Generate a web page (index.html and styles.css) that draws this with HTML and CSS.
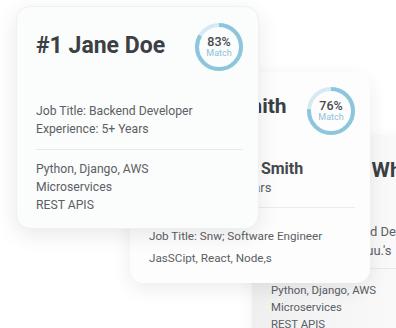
FILE: index.html
```html
<!DOCTYPE html>
<html lang="en">
<head>
    <meta charset="UTF-8">
    <meta name="viewport" content="width=device-width, initial-scale=1.0">
    <title>Candidate Matches</title>
    <link rel="stylesheet" href="styles.css">
</head>
<body>

    <div class="board">

        <div class="card card-third">
            <h2 class="name">#3 Emily White</h2>
            <div class="info">
                <p>Job Title: Backend Developer</p>
                <p>Experience: 5+ Yuu.'s</p>
            </div>
            <div class="skills">
                <p>Python, Django, AWS</p>
                <p>Microservices</p>
                <p>REST APIS</p>
            </div>
        </div>

        <div class="card card-second">
            <div class="card-head">
                <h2 class="name">#2 John Smith</h2>
                <div class="match">
                    <svg viewBox="0 0 48 48" width="48" height="48">
                        <circle class="track" cx="24" cy="24" r="22"></circle>
                        <circle class="progress" cx="24" cy="24" r="22" stroke-dasharray="105 139"></circle>
                    </svg>
                    <div class="match-text">
                        <span class="pct">76%</span>
                        <span class="label">Match</span>
                    </div>
                </div>
            </div>
            <div class="ghost">
                <h3>John Smith</h3>
                <p>5+ Years</p>
            </div>
            <div class="details">
                <p>Job Title: Snw; Software Engineer</p>
                <p>JasSCipt, React, Node,s</p>
            </div>
        </div>

        <div class="card card-first">
            <div class="card-head">
                <h2 class="name">#1 Jane Doe</h2>
                <div class="match">
                    <svg viewBox="0 0 48 48" width="48" height="48">
                        <circle class="track" cx="24" cy="24" r="22"></circle>
                        <circle class="progress" cx="24" cy="24" r="22" stroke-dasharray="115 139"></circle>
                    </svg>
                    <div class="match-text">
                        <span class="pct">83%</span>
                        <span class="label">Match</span>
                    </div>
                </div>
            </div>
            <div class="info">
                <p>Job Title: Backend Developer</p>
                <p>Experience: 5+ Years</p>
            </div>
            <div class="skills">
                <p>Python, Django, AWS</p>
                <p>Microservices</p>
                <p>REST APIS</p>
            </div>
        </div>

    </div>

</body>
</html>
```

FILE: styles.css
```css
body {
    margin: 0;
    background: #ffffff;
    font-family: Roboto, "Liberation Sans", sans-serif;
}
p, h2, h3 {
    margin: 0;
}
.board {
    position: relative;
    width: 396px;
    height: 328px;
    overflow: hidden;
}
.card {
    position: absolute;
    box-sizing: border-box;
    border-radius: 14px;
    color: #5b6064;
    font-size: 12.2px;
    line-height: 18px;
}
.name {
    font-weight: 700;
    color: #3b4045;
    white-space: nowrap;
}

/* front card */
.card-first {
    left: 16px;
    top: 6px;
    width: 243px;
    height: 223px;
    padding: 16px 15px 0 19px;
    background: #fbfcfc;
    border: 1px solid #eef1f2;
    box-shadow: 0 6px 22px rgba(0, 0, 0, 0.09);
    z-index: 3;
}
.card-first .name {
    font-size: 23px;
    line-height: 28px;
    margin-top: 9px;
}
.card-first .info {
    margin-top: 31px;
    padding-bottom: 11px;
    border-bottom: 1px solid #e4eaec;
}
.card-first .skills {
    margin-top: 10px;
}
.card-head {
    display: flex;
    justify-content: space-between;
    align-items: flex-start;
}

/* match ring */
.match {
    position: relative;
    width: 48px;
    height: 48px;
    flex-shrink: 0;
}
.match svg {
    display: block;
    transform: rotate(-90deg);
}
.track {
    fill: none;
    stroke: #d6eaf2;
    stroke-width: 4;
}
.progress {
    fill: none;
    stroke: #8cc6dd;
    stroke-width: 4;
}
.match-text {
    position: absolute;
    inset: 0;
    display: flex;
    flex-direction: column;
    align-items: center;
    justify-content: center;
}
.pct {
    font-size: 12.5px;
    line-height: 13px;
    font-weight: 500;
    color: #44494d;
}
.label {
    font-size: 9px;
    line-height: 11px;
    color: #8cc4da;
}

/* middle card */
.card-second {
    left: 130px;
    top: 72px;
    width: 240px;
    height: 211px;
    padding: 15px 15px 0 19px;
    background: #fdfdfd;
    box-shadow: 0 6px 20px rgba(0, 0, 0, 0.08);
    z-index: 2;
}
.card-second .name {
    font-size: 21px;
    line-height: 24px;
    margin-top: 7px;
}
.ghost {
    margin: 24px 0 0 72px;
    padding-bottom: 10px;
    border-bottom: 1px solid #e8ecee;
    font-size: 13px;
}
.ghost h3 {
    font-size: 16px;
    line-height: 20px;
    font-weight: 700;
    color: #45494d;
    white-space: nowrap;
}
.details {
    margin-top: 17px;
    font-size: 11.7px;
}
.details p {
    line-height: 22px;
}

/* back card */
.card-third {
    left: 252px;
    top: 135px;
    width: 200px;
    height: 230px;
    padding: 23px 0 0 19px;
    background: linear-gradient(to right, #efefef, #f8f8f8 60%, #fbfbfb);
    box-shadow: 0 4px 16px rgba(0, 0, 0, 0.06);
    z-index: 1;
}
.card-third .name {
    font-size: 21px;
    line-height: 24px;
    margin-left: 14px;
}
.card-third .info {
    margin-top: 40px;
    padding-bottom: 8px;
    border-bottom: 1px solid #e6e9ea;
    white-space: nowrap;
    font-size: 13px;
}
.card-third .info p {
    line-height: 19px;
}
.card-third .skills {
    margin-top: 13px;
    font-size: 11.4px;
}
.card-third .skills p {
    line-height: 17px;
}
```
